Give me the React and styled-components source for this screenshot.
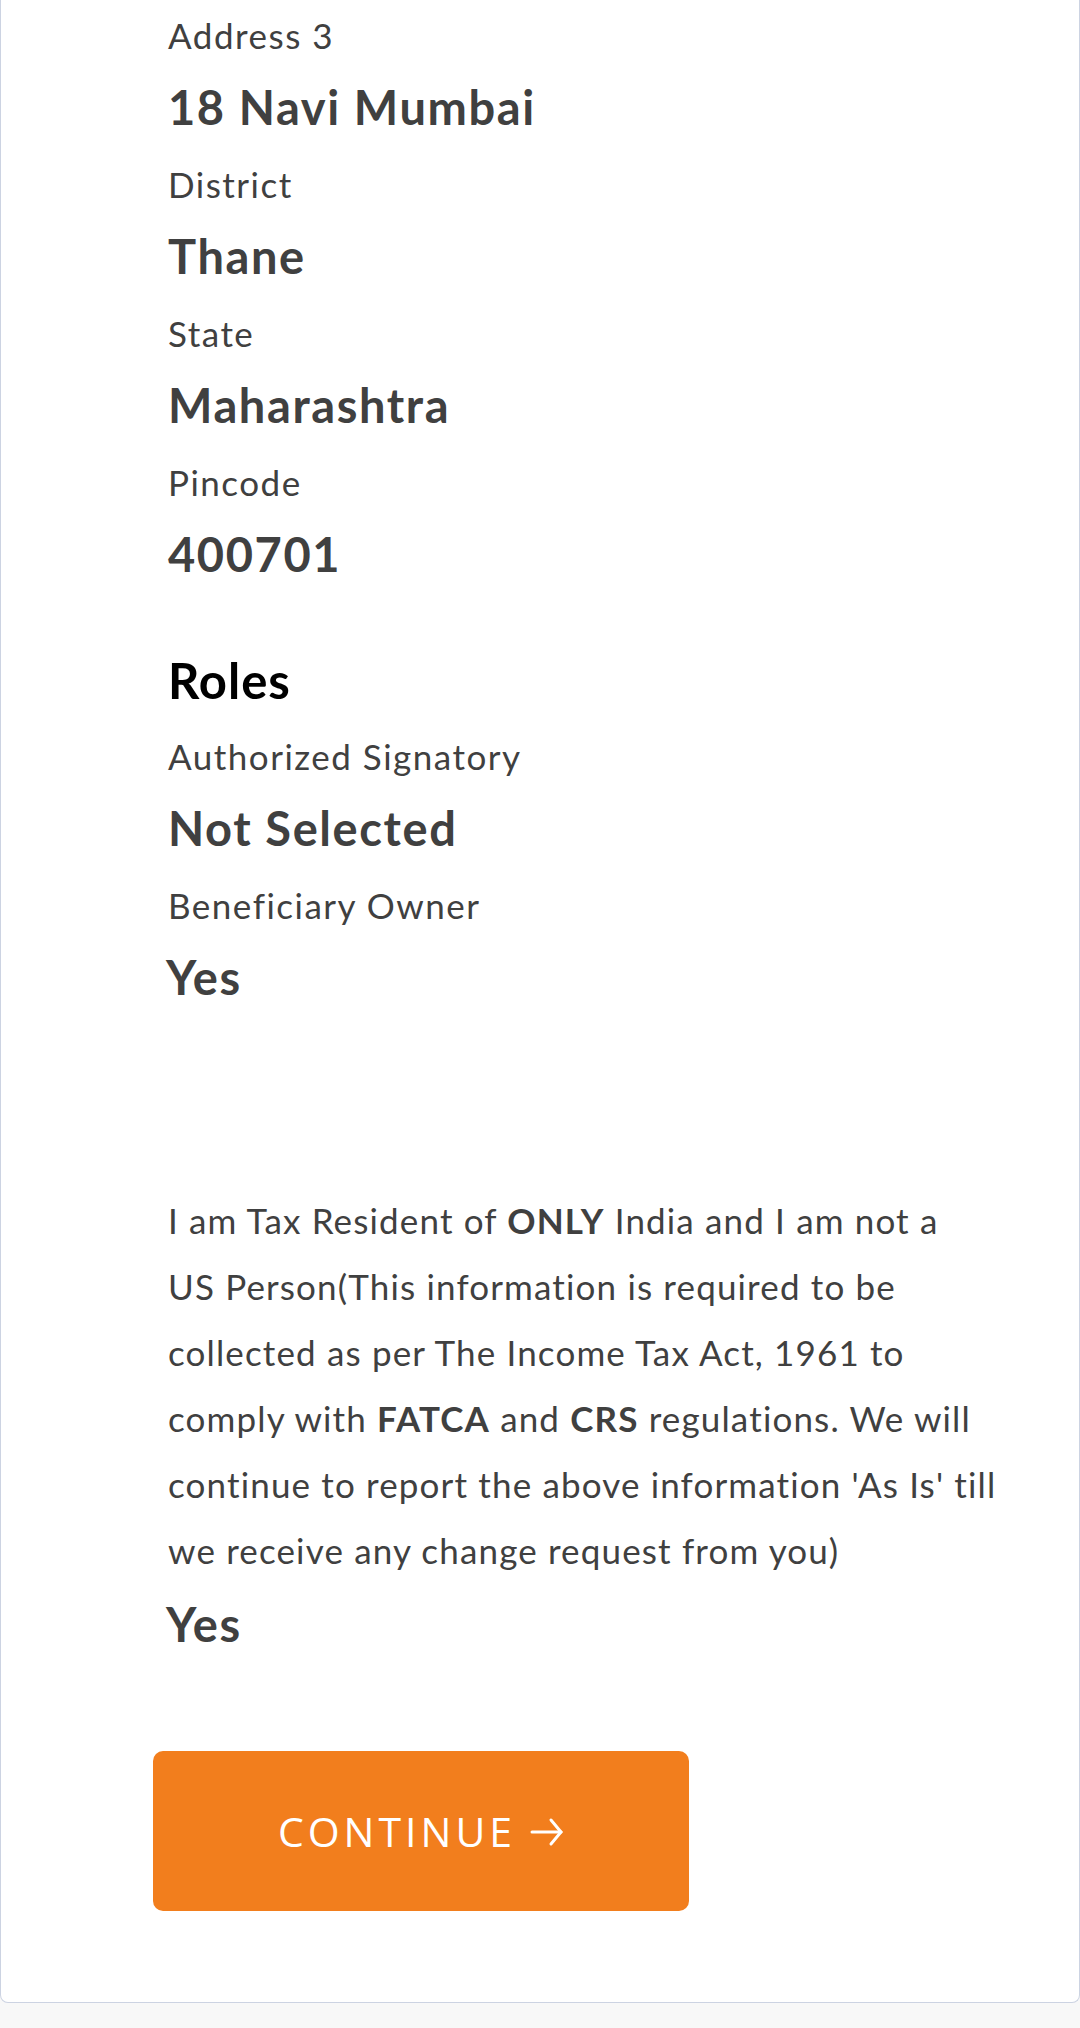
import React from 'react';
import styled, { createGlobalStyle } from 'styled-components';

const GlobalStyle = createGlobalStyle`
  html, body {
    margin: 0;
    padding: 0;
    background: #f8f8f8;
  }
  body {
    font-family: Lato, "Open Sans", sans-serif;
    color: #404040;
  }
`;

const Page = styled.div`
  width: 1080px;
  min-height: 2028px;
  background: #f8f8f8;
`;

const Card = styled.div`
  box-sizing: border-box;
  width: 1080px;
  background: #ffffff;
  border: 1px solid #ccd3e2;
  border-top: none;
  border-radius: 0 0 8px 8px;
  padding: 15px 40px 91px 167px;
`;

const Field = styled.div`
  display: flex;
  flex-direction: column;
  gap: 24px;
  margin-bottom: 29px;
`;

const Label = styled.div`
  height: 40px;
  line-height: 40px;
  font-size: 35px;
  letter-spacing: 1.5px;
  color: #404040;
  white-space: nowrap;
`;

const Value = styled.div`
  height: 56px;
  line-height: 56px;
  font-size: 47px;
  letter-spacing: 1.6px;
  font-weight: 700;
  color: #404040;
  white-space: nowrap;
  margin-left: ${props => (props.tight ? '-2px' : '0')};
`;

const SectionTitle = styled.div`
  height: 56px;
  line-height: 56px;
  font-size: 49px;
  letter-spacing: 1px;
  font-weight: 700;
  color: #000000;
  margin: 70px 0 28px;
`;

const Declaration = styled.p`
  margin: 182px 0 13px;
  font-size: 35px;
  letter-spacing: 1.15px;
  line-height: 66px;
  color: #404040;
  white-space: nowrap;

  b {
    font-weight: 700;
  }
`;

const ButtonRow = styled.div`
  display: flex;
  margin: 99px 0 0 -15px;
`;

const ContinueButton = styled.button`
  display: flex;
  align-items: center;
  justify-content: center;
  gap: 14px;
  width: 536px;
  height: 160px;
  border: none;
  border-radius: 10px;
  background: #f27e1d;
  color: #ffffff;
  font-family: "Open Sans", "Noto Sans", sans-serif;
  font-size: 41px;
  letter-spacing: 4px;
  cursor: pointer;
`;

const Arrow = styled.svg`
  width: 34px;
  height: 30px;
  margin-top: 2px;
`;

const fields = [
  { label: 'Address 3', value: '18 Navi Mumbai' },
  { label: 'District', value: 'Thane' },
  { label: 'State', value: 'Maharashtra' },
  { label: 'Pincode', value: '400701' },
];

const roles = [
  { label: 'Authorized Signatory', value: 'Not Selected' },
  { label: 'Beneficiary Owner', value: 'Yes', tight: true },
];

export default function App() {
  return (
    <Page>
      <GlobalStyle />
      <Card>
        {fields.map(f => (
          <Field key={f.label}>
            <Label>{f.label}</Label>
            <Value>{f.value}</Value>
          </Field>
        ))}

        <SectionTitle>Roles</SectionTitle>

        {roles.map(f => (
          <Field key={f.label}>
            <Label>{f.label}</Label>
            <Value tight={f.tight}>{f.value}</Value>
          </Field>
        ))}

        <Declaration>
          I am Tax Resident of <b>ONLY</b> India and I am not a<br />
          US Person(This information is required to be<br />
          collected as per The Income Tax Act, 1961 to<br />
          comply with <b>FATCA</b> and <b>CRS</b> regulations. We will<br />
          continue to report the above information 'As Is' till<br />
          we receive any change request from you)
        </Declaration>
        <Value tight>Yes</Value>

        <ButtonRow>
          <ContinueButton>
            CONTINUE
            <Arrow viewBox="0 0 34 30" fill="none" stroke="#ffffff" strokeWidth="3" strokeLinecap="round">
              <path d="M2 15H31" />
              <path d="M21 3L31 15L21 27" />
            </Arrow>
          </ContinueButton>
        </ButtonRow>
      </Card>
    </Page>
  );
}
